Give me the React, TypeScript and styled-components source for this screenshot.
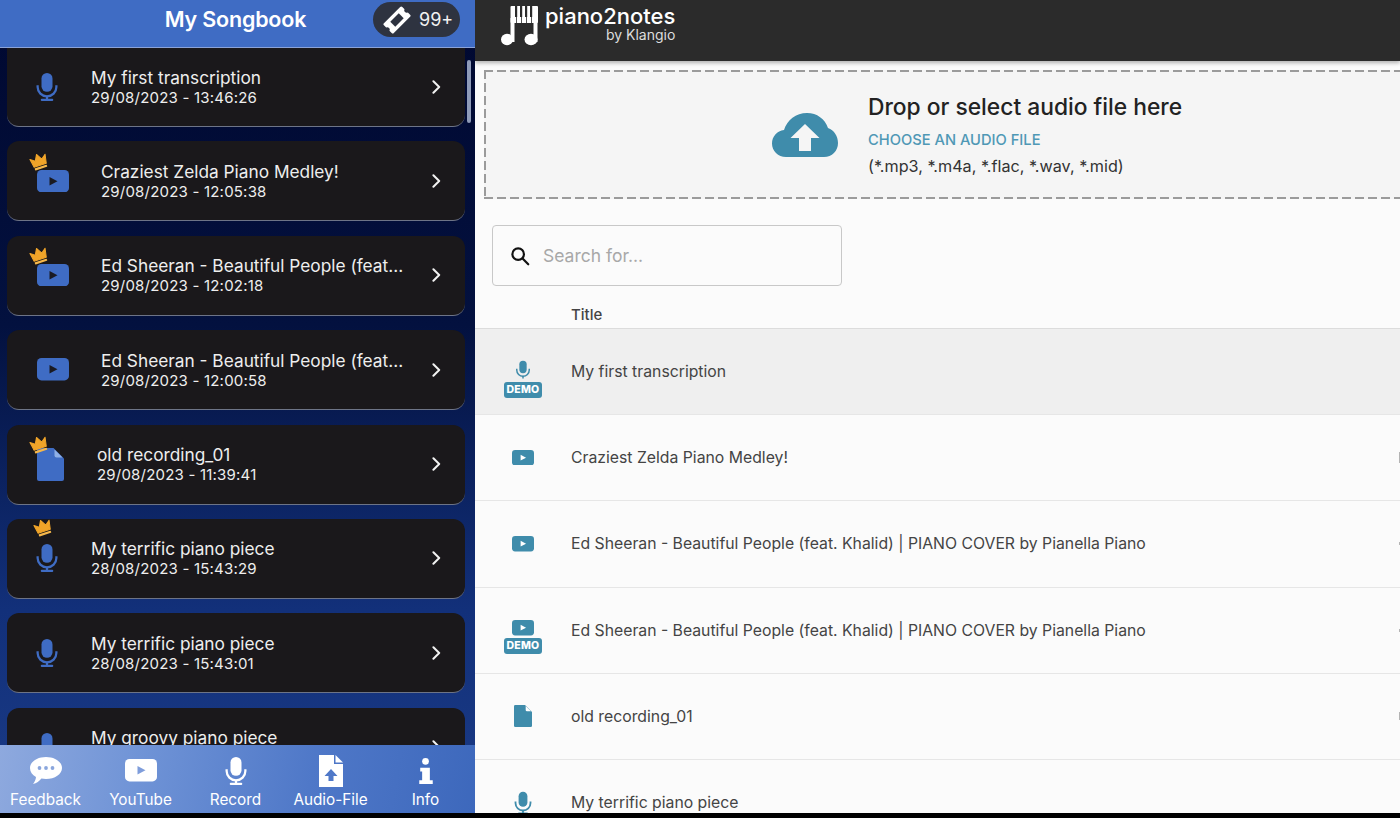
import React from 'react';
import styled, { createGlobalStyle } from 'styled-components';

const GlobalStyle = createGlobalStyle`
  html, body {
    margin: 0;
    padding: 0;
    background: #000;
  }
  * {
    box-sizing: border-box;
  }
`;

const BLUE = '#3f6cc4';
const TEAL = '#3f8cab';

const Mic = ({ size = 30, color = BLUE, base = true }: { size?: number; color?: string; base?: boolean }) => (
  <svg width={size} height={size} viewBox="0 0 24 24" fill={color}>
    <rect x="7.600" y="0.800" width="8.800" height="15" rx="4.400" />
    <path d="M3.600 10.500V12a8.400 8.400 0 0 0 16.800 0v-1.500h-1.800V12a6.600 6.600 0 0 1-13.200 0v-1.500z" />
    <rect x="11.100" y="19" width="1.800" height="3.200" />
    {base && <rect x="7" y="21.400" width="10" height="1.700" rx="0.800" />}
  </svg>
);

const Video = ({ width = 32, color = BLUE, play = '#1a1a22' }: { width?: number; color?: string; play?: string }) => (
  <svg width={width} height={width * 0.7} viewBox="0 0 32 22.400">
    <rect width="32" height="22.400" rx="4.500" fill={color} />
    <path d="M12.500 7l8 4.200-8 4.200z" fill={play} />
  </svg>
);

const FileIcon = ({ width = 27, height = 33, color = BLUE, fold = '#8fb0e6' }: { width?: number; height?: number; color?: string; fold?: string }) => (
  <svg width={width} height={height} viewBox="0 0 27 33">
    <path d="M2 0h14.500L27 10.500V31a2 2 0 0 1-2 2H2a2 2 0 0 1-2-2V2a2 2 0 0 1 2-2z" fill={color} />
    <path d="M17.500 1.500l8 8h-6a2 2 0 0 1-2-2z" fill={fold} />
  </svg>
);

const Crown = () => (
  <svg width="20" height="17" viewBox="0 0 20 17">
    <path d="M2 3.800l4.500 3.400L9.800 1l3.600 6 4.600-3.600-1.600 9H3.600z" fill="#f0a429" stroke="#f0a429" strokeLinejoin="round" />
    <rect x="3.600" y="13.800" width="12.800" height="2.200" rx="0.600" fill="#f7b84a" />
  </svg>
);

const Chevron = () => (
  <svg width="10" height="14" viewBox="0 0 10 14" fill="none">
    <path d="M2.400 1.300L8.200 7l-5.800 5.700" stroke="#f2f2f2" strokeWidth="2" strokeLinecap="round" strokeLinejoin="round" />
  </svg>
);

const Ticket = () => (
  <svg width="28" height="28" viewBox="0 0 28 28">
    <g transform="rotate(-45 14 14)">
      <path
        d="M2.500 7h23a1.500 1.500 0 0 1 1.500 1.500v3.200a2.400 2.400 0 0 0 0 4.600v3.200a1.500 1.500 0 0 1-1.500 1.500h-23A1.500 1.500 0 0 1 1 19.500v-3.200a2.400 2.400 0 0 0 0-4.600V8.500A1.500 1.500 0 0 1 2.500 7z"
        fill="#fff"
      />
      <rect x="8" y="10.500" width="12" height="7" fill="#2e3340" />
    </g>
  </svg>
);

const Logo = () => (
  <svg width="38" height="40" viewBox="0 0 38 40" fill="#fff">
    <rect x="16" y="0" width="21" height="17" rx="1" />
    <rect x="9.500" y="12" width="4" height="24" />
    <rect x="32.500" y="12" width="4" height="24" />
    <rect x="9.500" y="0" width="10" height="17" rx="1" />
    <g fill="#2b2b2b">
      <rect x="14" y="0" width="2.200" height="11" />
      <rect x="19" y="0" width="2.200" height="11" />
      <rect x="24" y="0" width="2.200" height="11" />
      <rect x="29" y="0" width="2.200" height="11" />
      <rect x="15" y="11" width="0.800" height="6" />
      <rect x="20" y="11" width="0.800" height="6" />
      <rect x="25" y="11" width="0.800" height="6" />
      <rect x="30" y="11" width="0.800" height="6" />
    </g>
    <ellipse cx="6" cy="33.500" rx="6" ry="5.800" />
    <ellipse cx="30" cy="33.500" rx="6.500" ry="5.800" />
  </svg>
);

const BubbleIcon = () => (
  <svg width="32" height="27" viewBox="0 0 32 27">
    <path d="M16 0c8.800 0 16 4.800 16 11s-7.200 11-16 11c-1.600 0-3.200-.2-4.600-.5C9.500 24 6.500 26.500 3 27c1.600-1.800 2.800-4.400 3-7C2.300 18 0 14.700 0 11 0 4.800 7.200 0 16 0z" fill="#fff" />
    <circle cx="9.500" cy="11" r="1.900" fill="#8aa6dd" />
    <circle cx="16" cy="11" r="1.900" fill="#8aa6dd" />
    <circle cx="22.500" cy="11" r="1.900" fill="#8aa6dd" />
  </svg>
);

const UploadFileIcon = () => (
  <svg width="24" height="32" viewBox="0 0 24 32">
    <path d="M0 0h15v9h9v23H0z" fill="#fff" />
    <path d="M16.500 0L24 7.500h-7.500z" fill="#fff" />
    <path d="M12 14l6.500 7H14.500v5h-5v-5H5.500z" fill="#4f78c8" />
  </svg>
);

const InfoIcon = () => (
  <svg width="14" height="26" viewBox="0 0 14 27" fill="#fff">
    <circle cx="6.500" cy="3.500" r="3.500" />
    <path d="M1 10h10v13h3v4H0v-4h3v-9H1z" />
  </svg>
);

const CloudIcon = () => (
  <svg width="66" height="44" viewBox="0 0 66 44">
    <path d="M14 44C6 44 0 38 0 30.500 0 23.500 5 18 12 17 15 7 24 0 35 0c10 0 18 6 21 15 6 2 10 8 10 15 0 8-6 14-14 14z" fill={TEAL} />
    <path d="M33 11l14.500 14H39v13H27V25h-8.500z" fill="#f5f5f5" />
  </svg>
);

const SearchIcon = () => (
  <svg width="22" height="22" viewBox="0 0 24 24" fill="none" stroke="#111" strokeWidth="2.400">
    <circle cx="10" cy="10" r="6.300" />
    <path d="M14.800 14.800L21 21" strokeLinecap="round" />
  </svg>
);

const Page = styled.div`
  width: 1400px;
  height: 818px;
  overflow: hidden;
  display: flex;
  background: #000;
  padding-bottom: 5px;
`;

const Sidebar = styled.div`
  width: 475px;
  height: 100%;
  flex: none;
  display: flex;
  flex-direction: column;
  font-family: Inter, 'Liberation Sans', sans-serif;
  background: linear-gradient(180deg, #000830 0%, #03113f 40%, #12307a 75%, #1b3b86 100%);
`;

const SideHeader = styled.header`
  height: 48px;
  flex: none;
  position: relative;
  display: flex;
  align-items: center;
  justify-content: center;
  padding: 0 4px 10px 0;
  background: ${BLUE};
  border-bottom: 1px solid #8ba3d8;
`;

const SideTitle = styled.h1`
  margin: 0;
  font-size: 21.500px;
  font-weight: 600;
  color: #fff;
  letter-spacing: -0.2px;
`;

const CreditBadge = styled.div`
  position: absolute;
  top: 2px;
  left: 373px;
  width: 87px;
  height: 35px;
  border-radius: 18px;
  background: #2e3340;
  color: #f2f2f2;
  display: flex;
  align-items: center;
  gap: 8px;
  padding-left: 10px;
  font-size: 18px;
`;

const SongList = styled.div`
  flex: 1;
  min-height: 0;
  overflow: hidden;
  position: relative;
  display: flex;
  flex-direction: column;
  gap: 14.400px;
  padding: 0 10px 0 7px;
`;

const ScrollThumb = styled.div`
  position: absolute;
  top: 12px;
  right: 4px;
  width: 4px;
  height: 63px;
  border-radius: 2px;
  background: #8f9bb8;
`;

const Card = styled.div`
  height: 80px;
  flex: none;
  display: flex;
  align-items: center;
  background: #1a181b;
  border-radius: 12px;
  border-bottom: 1px solid #6d7487;
  color: #eee;
`;

const FirstCard = styled(Card)`
  height: 79px;
  border-radius: 0 0 12px 12px;
`;

const CardIcon = styled.div<{ $width: number; $pad: number }>`
  position: relative;
  width: ${(p) => p.$width}px;
  flex: none;
  padding-left: ${(p) => p.$pad}px;
  display: flex;
  align-items: center;
`;

const CrownSlot = styled.span<{ $left: number; $top: number }>`
  position: absolute;
  left: ${(p) => p.$left}px;
  top: ${(p) => p.$top}px;
  transform: rotate(-18deg);
  display: flex;
`;

const CardText = styled.div`
  flex: 1;
  min-width: 0;
  display: flex;
  flex-direction: column;
`;

const CardTitle = styled.div`
  font-size: 17.300px;
  line-height: 21px;
  white-space: nowrap;
`;

const CardDate = styled.div`
  font-size: 15px;
  line-height: 19px;
  letter-spacing: 0.2px;
  white-space: pre;
`;

const ChevronSlot = styled.div`
  width: 34px;
  flex: none;
  display: flex;
`;

const BottomNav = styled.nav`
  height: 68px;
  flex: none;
  display: grid;
  grid-template-columns: repeat(5, 95px);
  background: linear-gradient(100deg, #8ea9de 0%, #6f93d6 30%, #4f78c8 65%, #3d68bc 100%);
`;

const NavItem = styled.div`
  margin-left: -4px;
  display: flex;
  flex-direction: column;
  align-items: center;
  color: #fff;
  font-size: 15.300px;
  line-height: 16px;
  padding-top: 9px;
  gap: 5px;
`;

const NavIcon = styled.div`
  height: 33px;
  display: flex;
  align-items: center;
  justify-content: center;
`;

const Main = styled.main`
  flex: 1;
  min-width: 0;
  height: 100%;
  display: flex;
  flex-direction: column;
  background: #fbfbfb;
  font-family: Inter, 'Liberation Sans', sans-serif;
  overflow: hidden;
`;

const TopBar = styled.header`
  height: 61px;
  flex: none;
  background: #2b2b2b;
  box-shadow: 0 2px 4px rgba(0, 0, 0, 0.3);
  display: flex;
  align-items: flex-start;
  padding: 6px 0 0 26px;
  gap: 6px;
  color: #fff;
  position: relative;
`;

const Brand = styled.div`
  margin-top: -3px;
  display: flex;
  flex-direction: column;
  align-items: flex-end;
`;

const BrandName = styled.div`
  font-size: 22px;
  line-height: 26px;
  font-weight: 500;
`;

const BrandSub = styled.div`
  font-size: 14px;
  line-height: 12px;
  color: #ddd;
`;

const dash = (dir: string) =>
  `repeating-linear-gradient(${dir}, #9b9b9b 0 9px, transparent 9px 13px)`;

const DropZone = styled.section`
  margin: 9px 0 0 9px;
  width: 930px;
  height: 129px;
  flex: none;
  background-color: #f5f5f5;
  background-image: ${dash('90deg')}, ${dash('90deg')}, ${dash('180deg')};
  background-size: 100% 2px, 100% 2px, 2px 100%;
  background-position: 0 0, 0 100%, 0 0;
  background-repeat: no-repeat;
  display: flex;
  align-items: center;
  gap: 30px;
  padding-left: 288px;
`;

const DropText = styled.div`
  display: flex;
  flex-direction: column;
`;

const DropTitle = styled.div`
  font-size: 22.800px;
  line-height: 30px;
  font-weight: 500;
  color: #222;
  margin-top: -2px;
`;

const DropLink = styled.div`
  font-size: 14.700px;
  line-height: 20px;
  margin-top: 8px;
  font-weight: 500;
  color: #4f98b5;
`;

const DropHint = styled.div`
  font-size: 16.200px;
  line-height: 20px;
  margin-top: 6px;
  color: #333;
`;

const SearchBox = styled.div`
  margin: 26px 0 0 17px;
  width: 350px;
  height: 61px;
  flex: none;
  display: flex;
  align-items: center;
  gap: 12px;
  padding-left: 16px;
  border: 1.500px solid #c8c8c8;
  border-radius: 4px;
  background: #fbfbfb;
  font-size: 17.500px;
  color: #a8a8a8;
`;

const ColumnHead = styled.div`
  height: 43px;
  flex: none;
  display: flex;
  align-items: flex-end;
  padding: 0 0 4px 96px;
  font-size: 15px;
  font-weight: 500;
  color: #444;
  border-bottom: 1px solid #dcdcdc;
`;

const Row = styled.div<{ $selected?: boolean }>`
  height: 86.200px;
  flex: none;
  display: flex;
  align-items: center;
  background: ${(p) => (p.$selected ? '#efefef' : 'transparent')};
  border-bottom: 1.500px solid #e6e6e6;
  color: #444;
  font-size: 15.780px;
`;

const RowIcon = styled.div<{ $demo?: boolean }>`
  width: 96px;
  flex: none;
  display: flex;
  flex-direction: column;
  align-items: center;
  padding-top: ${(p) => (p.$demo ? 14 : 0)}px;
`;

const DemoTag = styled.span`
  width: 38px;
  height: 16px;
  margin-top: 2px;
  border-radius: 3px;
  background: ${TEAL};
  color: #fff;
  font-size: 10.500px;
  font-weight: 800;
  line-height: 16px;
  text-align: center;
  letter-spacing: 0.2px;
`;

const RowTitle = styled.div`
  white-space: nowrap;
`;

// the next column is cut off at the window edge, only a sliver of it shows
const EdgeMark = styled.span<{ $height: number }>`
  margin-left: auto;
  width: 1px;
  height: ${(p) => p.$height}px;
  background: #b4b4b4;
`;

type Kind = 'mic' | 'video' | 'file';

const songs: { title: string; date: string; kind: Kind; crown?: boolean }[] = [
  { title: 'My first transcription', date: '29/08/2023 - 13:46:26', kind: 'mic' },
  { title: 'Craziest Zelda Piano Medley!', date: '29/08/2023 - 12:05:38', kind: 'video', crown: true },
  { title: 'Ed Sheeran - Beautiful People (feat...', date: '29/08/2023 - 12:02:18', kind: 'video', crown: true },
  { title: 'Ed Sheeran - Beautiful People (feat...', date: '29/08/2023 - 12:00:58', kind: 'video' },
  { title: 'old recording_01', date: '29/08/2023 - 11:39:41', kind: 'file', crown: true },
  { title: 'My terrific piano piece', date: '28/08/2023 - 15:43:29', kind: 'mic', crown: true },
  { title: 'My terrific piano piece', date: '28/08/2023 - 15:43:01', kind: 'mic' },
  { title: 'My groovy piano piece', date: ' ', kind: 'mic' },
];

const rows: { title: string; kind: Kind; demo?: boolean; edge?: number }[] = [
  { title: 'My first transcription', kind: 'mic', demo: true },
  { title: 'Craziest Zelda Piano Medley!', kind: 'video', edge: 11 },
  { title: 'Ed Sheeran - Beautiful People (feat. Khalid) | PIANO COVER by Pianella Piano', kind: 'video', edge: 3 },
  { title: 'Ed Sheeran - Beautiful People (feat. Khalid) | PIANO COVER by Pianella Piano', kind: 'video', demo: true, edge: 3 },
  { title: 'old recording_01', kind: 'file', edge: 8 },
  { title: 'My terrific piano piece', kind: 'mic' },
];

const cardWidth: Record<Kind, number> = { mic: 84, video: 94, file: 90 };
const iconPad: Record<Kind, number> = { mic: 25, video: 30, file: 30 };

const crownPlace: Record<Kind, { left: number; top: number }> = {
  mic: { left: 26, top: -24 },
  video: { left: 22, top: -17 },
  file: { left: 22, top: -12 },
};

const SongCard = ({ song, first }: { song: (typeof songs)[number]; first: boolean }) => {
  const Wrap = first ? FirstCard : Card;
  return (
    <Wrap>
      <CardIcon $width={cardWidth[song.kind]} $pad={iconPad[song.kind]}>
        {song.kind === 'mic' && <Mic />}
        {song.kind === 'video' && <Video />}
        {song.kind === 'file' && <FileIcon />}
        {song.crown && (
          <CrownSlot $left={crownPlace[song.kind].left} $top={crownPlace[song.kind].top}>
            <Crown />
          </CrownSlot>
        )}
      </CardIcon>
      <CardText>
        <CardTitle>{song.title}</CardTitle>
        <CardDate>{song.date}</CardDate>
      </CardText>
      <ChevronSlot>
        <Chevron />
      </ChevronSlot>
    </Wrap>
  );
};

export default function App() {
  return (
    <>
      <GlobalStyle />
      <Page>
        <Sidebar>
          <SideHeader>
            <SideTitle>My Songbook</SideTitle>
            <CreditBadge>
              <Ticket />
              99+
            </CreditBadge>
          </SideHeader>
          <SongList>
            {songs.map((song, i) => (
              <SongCard key={i} song={song} first={i === 0} />
            ))}
            <ScrollThumb />
          </SongList>
          <BottomNav>
            <NavItem><NavIcon><BubbleIcon /></NavIcon>Feedback</NavItem>
            <NavItem><NavIcon><Video width={32} color="#fff" play="#7f9ddb" /></NavIcon>YouTube</NavItem>
            <NavItem><NavIcon><Mic size={30} color="#fff" /></NavIcon>Record</NavItem>
            <NavItem><NavIcon><UploadFileIcon /></NavIcon>Audio-File</NavItem>
            <NavItem><NavIcon><InfoIcon /></NavIcon>Info</NavItem>
          </BottomNav>
        </Sidebar>
        <Main>
          <TopBar>
            <Logo />
            <Brand>
              <BrandName>piano2notes</BrandName>
              <BrandSub>by Klangio</BrandSub>
            </Brand>
          </TopBar>
          <DropZone>
            <CloudIcon />
            <DropText>
              <DropTitle>Drop or select audio file here</DropTitle>
              <DropLink>CHOOSE AN AUDIO FILE</DropLink>
              <DropHint>(*.mp3, *.m4a, *.flac, *.wav, *.mid)</DropHint>
            </DropText>
          </DropZone>
          <SearchBox>
            <SearchIcon />
            Search for...
          </SearchBox>
          <ColumnHead>Title</ColumnHead>
          {rows.map((row, i) => (
            <Row key={i} $selected={i === 0}>
              <RowIcon $demo={row.demo}>
                {row.kind === 'mic' && <Mic size={row.demo ? 20 : 24} color={TEAL} base={!row.demo} />}
                {row.kind === 'video' && <Video width={22} color={TEAL} play="#fff" />}
                {row.kind === 'file' && <FileIcon width={18} height={22} color={TEAL} fold="#fff" />}
                {row.demo && <DemoTag>DEMO</DemoTag>}
              </RowIcon>
              <RowTitle>{row.title}</RowTitle>
              {row.edge && <EdgeMark $height={row.edge} />}
            </Row>
          ))}
        </Main>
      </Page>
    </>
  );
}
